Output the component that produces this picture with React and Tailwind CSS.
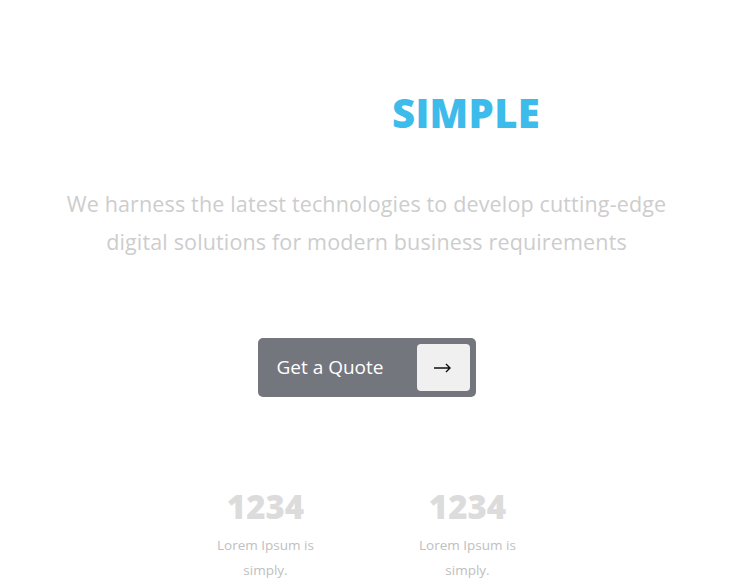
export default function App() {
  return (
    <div className="w-[733px] h-[579px] bg-white overflow-hidden flex flex-col items-center" style={{ fontFamily: '"Open Sans", "Noto Sans", sans-serif' }}>
      <h1 className="shrink-0 mt-[86px] h-[54px] w-full flex justify-center text-[40px] leading-[54px] font-extrabold text-[#3dbbea]">
        <span className="w-[199px]" aria-hidden="true"></span>
        <span className="tracking-[0.3px]">SIMPLE</span>
      </h1>
      <p className="shrink-0 mt-[45px] w-[640px] text-center text-[21.5px] tracking-[0.15px] leading-[38px] text-[#cdcdcd]">
        We harness the latest technologies to develop cutting-edge digital solutions for modern business requirements
      </p>
      <button className="shrink-0 mt-[77px] w-[218px] h-[59px] rounded-[5px] bg-[#74767e] flex items-center pl-[19px] pr-[6px] justify-between">
        <span className="text-white text-[19px]">Get a Quote</span>
        <span className="w-[53px] h-[47px] rounded-[4px] bg-[#f0f0f0] flex items-center justify-center">
          <svg width="18" height="10" viewBox="0 0 18 10" fill="none" stroke="#111" strokeWidth="1.4">
            <path d="M0 5h16M12 1l4 4-4 4" />
          </svg>
        </span>
      </button>
      <div className="shrink-0 mt-[88px] flex gap-[102px]">
        {[0, 1].map((i) => (
          <div key={i} className="w-[100px] flex flex-col items-center">
            <div className="text-[33px] leading-[44px] font-extrabold text-[#dcdcdc]">1234</div>
            <div className="mt-[4px] text-center text-[13.5px] leading-[25px] text-[#c0c0c0]">Lorem Ipsum is simply.</div>
          </div>
        ))}
      </div>
    </div>
  );
}
